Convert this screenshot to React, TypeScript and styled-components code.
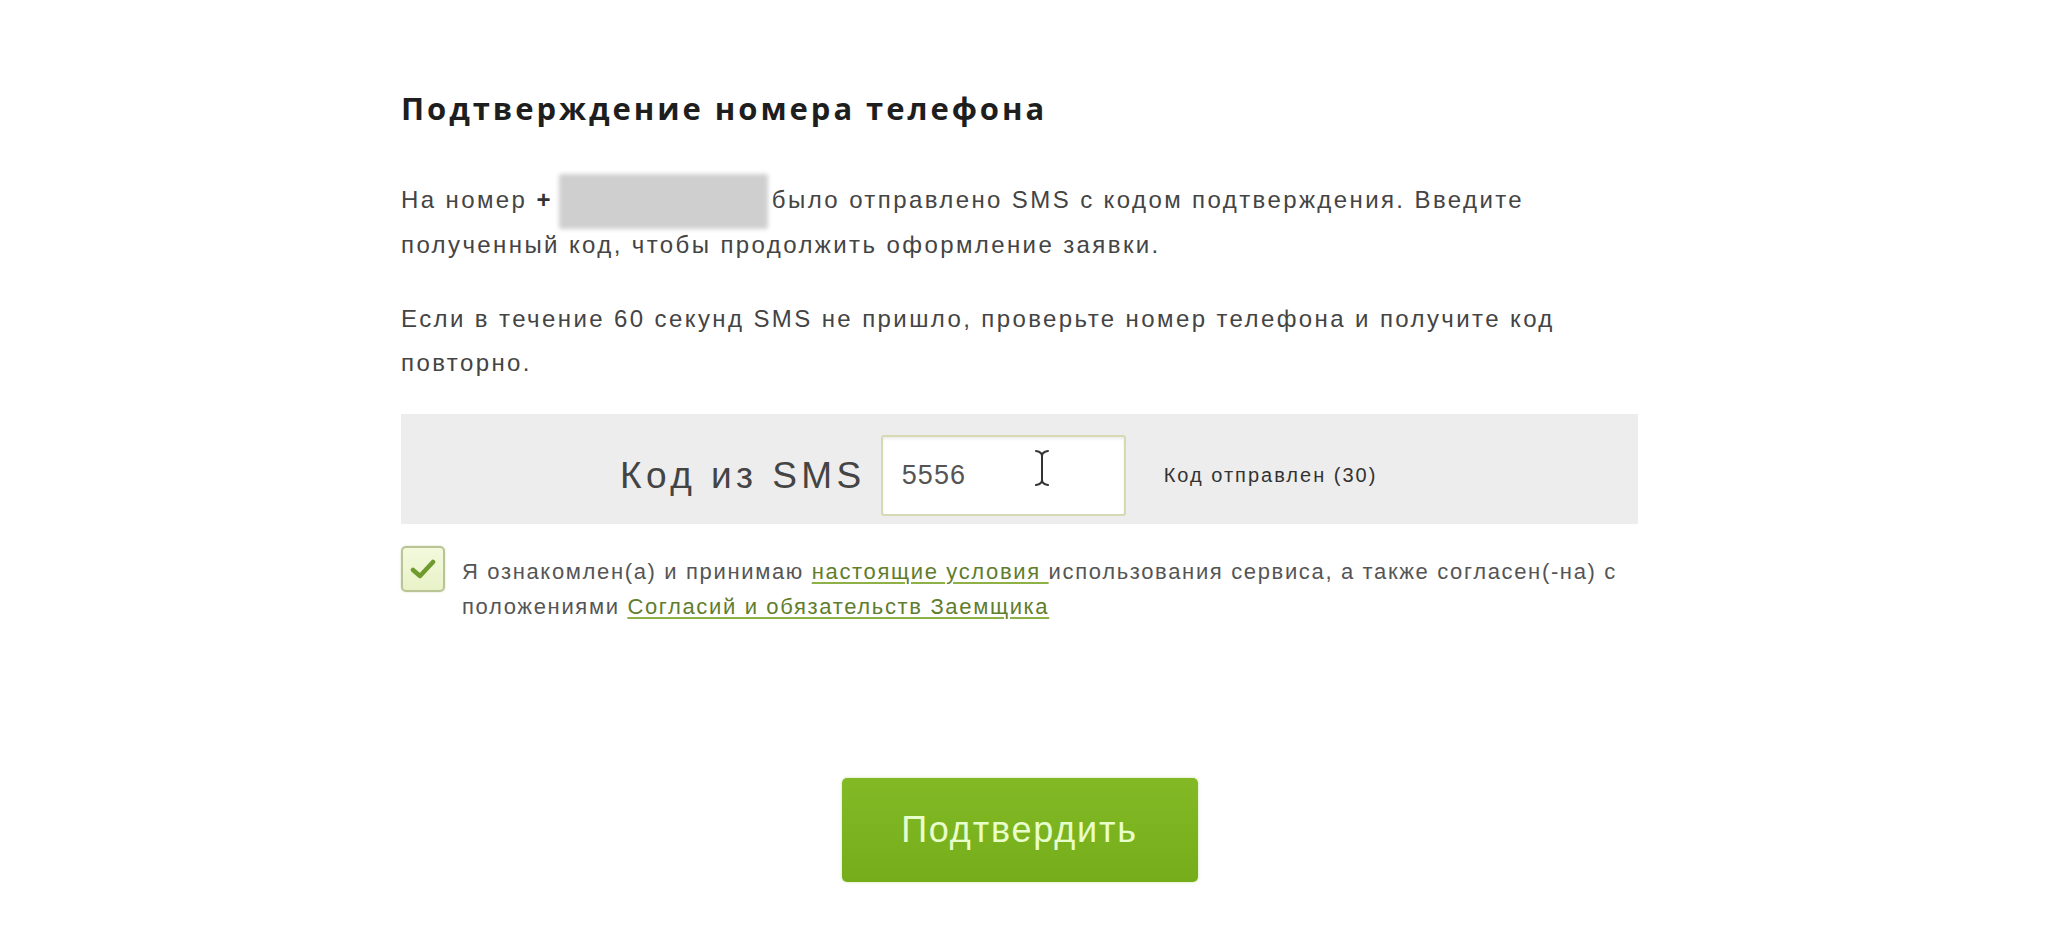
import React from 'react'
import styled, { createGlobalStyle } from 'styled-components'

const GlobalStyle = createGlobalStyle`
  html, body {
    margin: 0;
    padding: 0;
    background: #ffffff;
  }
  body {
    font-family: 'Liberation Sans', Arial, sans-serif;
    color: #444;
  }
`

const Page = styled.div`
  padding-top: 88px;
  min-height: 935px;
  box-sizing: border-box;
`

const Container = styled.div`
  margin-left: 401px;
  width: 1237px;
`

const Title = styled.h1`
  margin: 0;
  font-family: 'Open Sans', 'Liberation Sans', sans-serif;
  font-weight: 700;
  font-size: 31px;
  line-height: 40px;
  letter-spacing: 0.095em;
  color: #1e1e1e;
`

const Paragraph = styled.p<{ $gap: number }>`
  margin: ${({ $gap }) => $gap}px 0 0;
  max-width: 1200px;
  font-size: 24px;
  line-height: 44px;
  letter-spacing: 0.1em;
  color: #444;
`

const Plus = styled.b`
  color: #333;
`

const Hidden = styled.span`
  display: inline-block;
  width: 209px;
  height: 43px;
  margin: 0 4px 0 6px;
  vertical-align: middle;
  background: #cfcfcf;
  box-shadow: 0 6px 0 #cfcfcf, 0 -6px 0 #cfcfcf;
  filter: blur(2px);
  border-radius: 2px;
`

const CodeBand = styled.div`
  margin-top: 29px;
  display: flex;
  align-items: center;
  padding: 21px 0 8px 219px;
  background: #ededed;
`

const CodeLabel = styled.label`
  font-size: 37px;
  letter-spacing: 0.12em;
  color: #444;
  margin-right: 15px;
  white-space: nowrap;
`

const InputBox = styled.div`
  position: relative;
  box-sizing: border-box;
  width: 245px;
  height: 81px;
  border: 2px solid #d6d9b2;
  border-radius: 3px;
  background: #fff;
  box-shadow: inset 0 2px 3px rgba(0, 0, 0, 0.08);
  display: flex;
  align-items: center;
  padding-left: 19px;
`

const CodeValue = styled.span`
  font-size: 27px;
  letter-spacing: 0.04em;
  color: #555;
`

const Cursor = styled.svg`
  position: absolute;
  left: 149px;
  top: 12px;
`

const Status = styled.span`
  margin-left: 38px;
  font-size: 20px;
  letter-spacing: 0.1em;
  color: #333;
  white-space: nowrap;
`

const AgreeRow = styled.div`
  margin-top: 22px;
  display: flex;
  align-items: flex-start;
  gap: 17px;
`

const Checkbox = styled.span`
  flex: none;
  box-sizing: border-box;
  width: 44px;
  height: 46px;
  border: 2px solid #b9c496;
  border-radius: 5px;
  background: linear-gradient(#f3f9dc, #e8f2c8);
  box-shadow: 0 0 2px rgba(120, 140, 60, 0.35);
  display: flex;
  align-items: center;
  justify-content: center;
`

const AgreeText = styled.div`
  margin-top: 8px;
  font-size: 22px;
  line-height: 35px;
  letter-spacing: 0.075em;
  color: #555;
`

const TermsLink = styled.a`
  color: #5f7d2c;
  text-decoration: underline;
  text-decoration-color: #8db146;
  text-underline-offset: 3px;
`

const Actions = styled.div`
  margin-top: 154px;
  display: flex;
  justify-content: center;
`

const SubmitButton = styled.button`
  width: 356px;
  height: 104px;
  border: none;
  border-radius: 5px;
  background: linear-gradient(#82b925, #76ae1b);
  box-shadow: 0 0 3px rgba(120, 180, 30, 0.4);
  color: #e8ffcc;
  font-family: 'Liberation Sans', Arial, sans-serif;
  font-size: 36px;
  letter-spacing: 0.05em;
  cursor: pointer;
`

const App: React.FC = () => (
  <Page>
    <GlobalStyle />
    <Container>
      <Title>Подтверждение номера телефона</Title>
      <Paragraph $gap={50}>
        На номер <Plus>+</Plus>
        <Hidden />
        было отправлено SMS с кодом подтверждения. Введите полученный код, чтобы продолжить оформление заявки.
      </Paragraph>
      <Paragraph $gap={30}>
        Если в течение 60 секунд SMS не пришло, проверьте номер телефона и получите код повторно.
      </Paragraph>
      <CodeBand>
        <CodeLabel>Код из SMS</CodeLabel>
        <InputBox>
          <CodeValue>5556</CodeValue>
          <Cursor width="20" height="38" viewBox="0 0 20 38">
            <path
              d="M4 2 Q10 3 10 7 L10 31 Q10 35 4 36 M16 2 Q10 3 10 7 M10 31 Q10 35 16 36"
              fill="none"
              stroke="#fff"
              strokeWidth="4"
              strokeLinecap="round"
            />
            <path
              d="M4 2 Q10 3 10 7 L10 31 Q10 35 4 36 M16 2 Q10 3 10 7 M10 31 Q10 35 16 36"
              fill="none"
              stroke="#333"
              strokeWidth="2"
              strokeLinecap="round"
            />
          </Cursor>
        </InputBox>
        <Status>Код отправлен (30)</Status>
      </CodeBand>
      <AgreeRow>
        <Checkbox>
          <svg width="26" height="22" viewBox="0 0 26 22">
            <path d="M3 12 L10 18 L23 4" fill="none" stroke="#6f9a2e" strokeWidth="4.5" strokeLinecap="round" strokeLinejoin="round" />
          </svg>
        </Checkbox>
        <AgreeText>
          Я ознакомлен(а) и принимаю <TermsLink href="#">настоящие условия </TermsLink>использования сервиса, а также
          согласен(-на) с положениями <TermsLink href="#">Согласий и обязательств Заемщика</TermsLink>
        </AgreeText>
      </AgreeRow>
      <Actions>
        <SubmitButton type="button">Подтвердить</SubmitButton>
      </Actions>
    </Container>
  </Page>
)

export default App
